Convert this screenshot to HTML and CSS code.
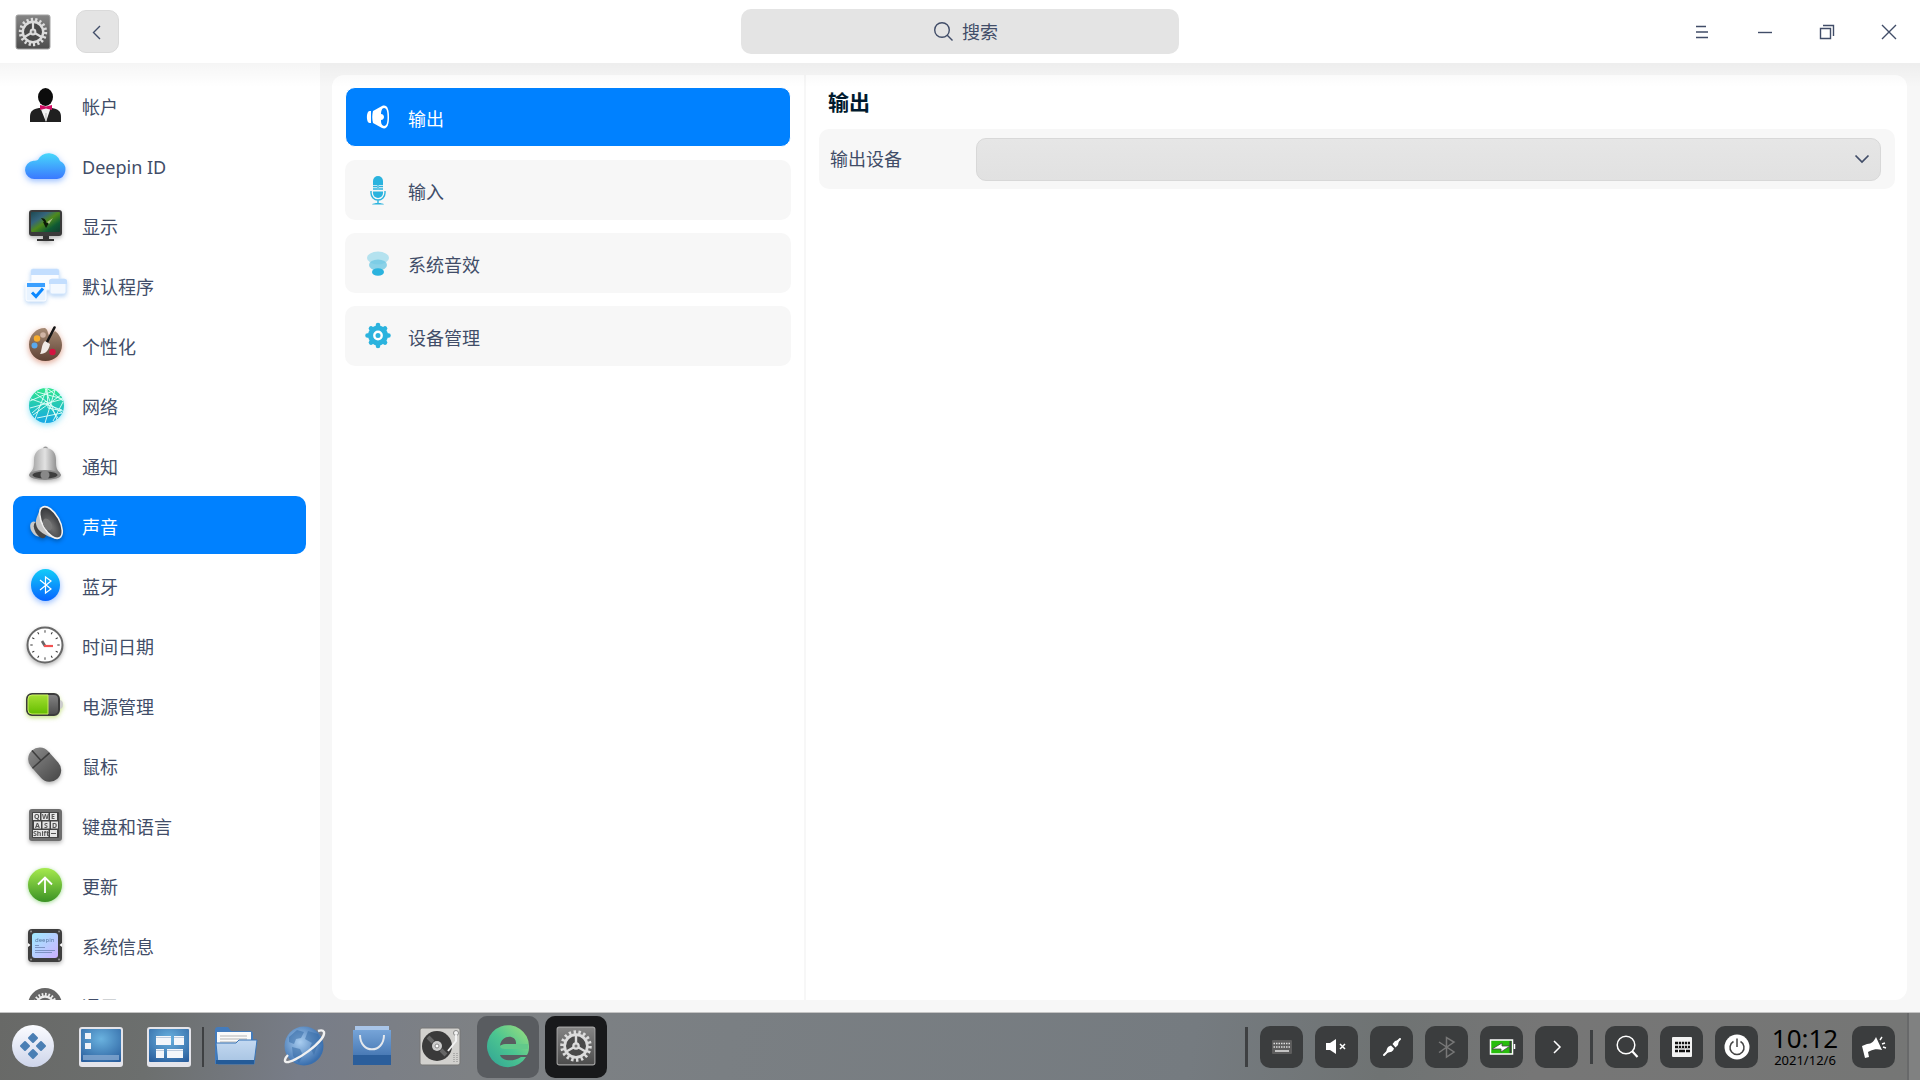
FILE: index.html
```
<!DOCTYPE html>
<html lang="zh-CN">
<head>
    <meta charset="UTF-8">
    <meta name="viewport" content="width=device-width, initial-scale=1.0">
    <title>控制中心</title>
    <link rel="stylesheet" href="styles.css">
</head>
<body>
    <!-- Shared gradients and symbols -->
    <svg class="defs" aria-hidden="true">
        <defs>
            <linearGradient id="g-dark" x1="0" y1="0" x2="0" y2="1"><stop offset="0" stop-color="#858585"/><stop offset="1" stop-color="#4c4c4c"/></linearGradient>
            <linearGradient id="g-cloud" x1="0" y1="0" x2="0" y2="1"><stop offset="0" stop-color="#47d8fb"/><stop offset="1" stop-color="#3a78ff"/></linearGradient>
            <linearGradient id="g-net" x1="0" y1="0" x2="0" y2="1"><stop offset="0" stop-color="#2fe68c"/><stop offset="1" stop-color="#16a8e6"/></linearGradient>
            <linearGradient id="g-bell" x1="0" y1="0" x2="1" y2="0"><stop offset="0" stop-color="#9a9a9a"/><stop offset=".5" stop-color="#e2e2e2"/><stop offset="1" stop-color="#777"/></linearGradient>
            <linearGradient id="g-bt" x1="0" y1="0" x2="0" y2="1"><stop offset="0" stop-color="#12ccf8"/><stop offset="1" stop-color="#0664ff"/></linearGradient>
            <linearGradient id="g-green" x1="0" y1="0" x2="0" y2="1"><stop offset="0" stop-color="#a6ea4e"/><stop offset="1" stop-color="#3a9224"/></linearGradient>
            <linearGradient id="g-bat" x1="0" y1="0" x2="0" y2="1"><stop offset="0" stop-color="#a4e032"/><stop offset="1" stop-color="#64bd00"/></linearGradient>
            <linearGradient id="g-pal" x1="0" y1="0" x2="0" y2="1"><stop offset="0" stop-color="#a58a74"/><stop offset="1" stop-color="#5f4234"/></linearGradient>
            <linearGradient id="g-chip" x1="0" y1="0" x2="1" y2="1"><stop offset="0" stop-color="#a0ecff"/><stop offset="1" stop-color="#cdb0ff"/></linearGradient>
            <linearGradient id="g-screen" x1="0" y1="0" x2="1" y2="1"><stop offset="0" stop-color="#1d4a52"/><stop offset=".3" stop-color="#35647c"/><stop offset=".5" stop-color="#4f8a1c"/><stop offset=".75" stop-color="#0f5a34"/><stop offset="1" stop-color="#123c30"/></linearGradient>
            <linearGradient id="g-white" x1="0" y1="0" x2="0" y2="1"><stop offset="0" stop-color="#fbfcff"/><stop offset="1" stop-color="#ced5ea"/></linearGradient>
            <linearGradient id="g-folder" x1="0" y1="0" x2="0" y2="1"><stop offset="0" stop-color="#c4d9f1"/><stop offset="1" stop-color="#a6c3e2"/></linearGradient>
            <linearGradient id="g-bag" x1="0" y1="0" x2="0" y2="1"><stop offset="0" stop-color="#76a4d8"/><stop offset="1" stop-color="#386aa8"/></linearGradient>
            <linearGradient id="g-e" x1="0" y1="1" x2="1" y2="0"><stop offset="0" stop-color="#2fa296"/><stop offset=".5" stop-color="#4cc590"/><stop offset="1" stop-color="#a0e07e"/></linearGradient>
            <radialGradient id="g-blue" cx=".5" cy=".3" r=".8"><stop offset="0" stop-color="#6ab2df"/><stop offset="1" stop-color="#2a5f9e"/></radialGradient>
            <radialGradient id="g-globe" cx=".4" cy=".4" r=".6"><stop offset="0" stop-color="#a9cdf0"/><stop offset="1" stop-color="#3a6fae"/></radialGradient>
            <radialGradient id="g-cone" cx=".4" cy=".6" r=".7"><stop offset="0" stop-color="#777"/><stop offset="1" stop-color="#2b2d31"/></radialGradient>

            <symbol id="gear" viewBox="0 0 36 36">
                <rect x="1" y="1" width="34" height="34" rx="2" fill="url(#g-dark)" stroke="#a2a2a2"/>
                <circle cx="18" cy="18" r="9" fill="#4a4a4a"/>
                <circle cx="18" cy="18" r="12.500" fill="none" stroke="#dcdcdc" stroke-width="3.400" pathLength="36" stroke-dasharray="1 1"/>
                <circle cx="18" cy="18" r="10.200" fill="none" stroke="#dcdcdc" stroke-width="2.400"/>
                <path d="M18 18V8M18 18l-9 5.200M18 18l9 5.200" stroke="#dcdcdc" stroke-width="2.200"/>
                <circle cx="18" cy="18" r="3.400" fill="#dcdcdc"/>
                <circle cx="18" cy="18" r="1.400" fill="#777"/>
            </symbol>
        </defs>
    </svg>

    <header class="titlebar">
        <div class="titlebar-left">
            <svg class="app-logo" aria-hidden="true"><use href="#gear"/></svg>
            <button class="back-button" aria-label="返回">
                <svg width="16" height="16" viewBox="0 0 16 16"><path d="M10 2L3.500 8.500L10 15" class="line"/></svg>
            </button>
        </div>
        <label class="search">
            <svg width="20" height="20" viewBox="0 0 20 20"><circle cx="9" cy="8" r="7.300" class="line"/><path d="M14 13l5.500 5.500" class="line"/></svg>
            <input type="text" placeholder="搜索" aria-label="搜索">
        </label>
        <div class="window-buttons">
            <button aria-label="菜单"><svg width="16" height="16" viewBox="0 0 16 16"><path d="M1 2.500h10M1 8h12M1 13.500h12" class="line"/></svg></button>
            <button aria-label="最小化"><svg width="16" height="16" viewBox="0 0 16 16"><path d="M1 8.500h14" class="line"/></svg></button>
            <button aria-label="还原"><svg width="16" height="16" viewBox="0 0 16 16"><path d="M1.500 4.500h10v10h-10zM4 1.500h10.500V12" class="line"/></svg></button>
            <button aria-label="关闭"><svg width="16" height="16" viewBox="0 0 16 16"><path d="M1 1l14 14M15 1L1 15" class="line"/></svg></button>
        </div>
    </header>

    <main class="window-body">
        <nav class="sidebar">
            <ul>
                <li><a href="#">
                    <svg class="icon" viewBox="0 0 44 44">
                        <path d="M7 39v-5c0-6 3-8 9-9h13c6 1 9 3 9 9v5z" fill="#202020"/>
                        <path d="M17 24h11l-5 15z" fill="#f2f2f2"/>
                        <path d="M23 30v8" stroke="#bbb"/>
                        <ellipse cx="22.500" cy="14" rx="7.500" ry="9" fill="#0c0c0c"/>
                        <path d="M17 22l6 1.500 6-1.500v5l-6-1.500-6 1.500z" fill="#d10d63"/>
                    </svg>
                    <span>帐户</span></a></li>
                <li><a href="#">
                    <svg class="icon glow-blue" viewBox="0 0 44 44">
                        <path d="M12 36a9 9 0 0 1-1.500-18.200c2 0 3.500-.3 4.500-1a12 12 0 0 1 22 1.200A9.500 9.500 0 0 1 34 36z" fill="url(#g-cloud)"/>
                    </svg>
                    <span>Deepin ID</span></a></li>
                <li><a href="#">
                    <svg class="icon shade" viewBox="0 0 44 44">
                        <rect x="6" y="7" width="33" height="26" rx="3" fill="#3a3a3a"/>
                        <rect x="8" y="9" width="29" height="20" rx="1" fill="url(#g-screen)"/>
                        <path d="M18 15c4 0 6 3 5 6-1-1-3-3-5-6zM20 19l6 1-3 5z" fill="#0c1a08"/>
                        <path d="M24 19l6-4-4 6z" fill="#a9bf86"/>
                        <path d="M20 33h6v3h5v2H14v-2h6z" fill="#333"/>
                    </svg>
                    <span>显示</span></a></li>
                <li><a href="#">
                    <svg class="icon glow-sky" viewBox="0 0 44 44">
                        <rect x="8" y="6" width="28" height="21" rx="2" fill="#fafcff" stroke="#dcebfd"/>
                        <path d="M8 12V8a2 2 0 0 1 2-2h24a2 2 0 0 1 2 2v4z" fill="#c3defe"/>
                        <rect x="27" y="16" width="16" height="15" rx="2" fill="#f4f9ff" stroke="#d3e6fc"/>
                        <path d="M26 21v-3a2 2 0 0 1 2-2h14a2 2 0 0 1 2 2v3z" fill="#c3defe"/>
                        <rect x="3" y="19" width="20" height="19" rx="2" fill="#e8f3ff" stroke="#fff"/>
                        <path d="M4 24v-4h18v4z" fill="#3ba0ff"/>
                        <path d="M9 29.500l4 4 7-8" fill="none" stroke="#0a88ff" stroke-width="3"/>
                    </svg>
                    <span>默认程序</span></a></li>
                <li><a href="#">
                    <svg class="icon glow-red" viewBox="0 0 44 44">
                        <path d="M22 5C13 5 6 12.500 6 21.500S13 38 22.500 38 39 31 39 22c0-6-3-11-7-14l-5 5c-3-1-1-6-5-8z" fill="url(#g-pal)"/>
                        <circle cx="20" cy="12" r="2.800" fill="#d0b4a4"/>
                        <circle cx="14" cy="15.500" r="3.200" fill="#f6ab2c"/>
                        <circle cx="11.500" cy="22.500" r="3" fill="#59a9ee"/>
                        <circle cx="29.500" cy="29" r="3.200" fill="#d4133f"/>
                        <path d="M31.500 4.500L24 19" stroke="#161616" stroke-width="2.600" stroke-linecap="round"/>
                        <path d="M22 18l5 3c-1 6-4 10-10 10 2-3 1-9 5-13z" fill="#f0ebe6"/>
                    </svg>
                    <span>个性化</span></a></li>
                <li><a href="#">
                    <svg class="icon glow-cyan" viewBox="0 0 44 44">
                        <circle cx="23.500" cy="22.500" r="17.500" fill="url(#g-net)"/>
                        <path d="M7 18l25-11-10 33M12 10l27 20-25 5M22 5l12 32M24 5l-12 31M7 25l33-9M10 32l28-20M8 16l31 11M30 38l10-19M25 6l15 12M14 9l26 7M24 5l1 20 15 3M9 30l14-12 12 17" stroke="#e2fff8" stroke-width=".9" fill="none"/>
                    </svg>
                    <span>网络</span></a></li>
                <li><a href="#">
                    <svg class="icon shade" viewBox="0 0 44 44">
                        <circle cx="22.500" cy="6" r="2.500" fill="#999"/>
                        <path d="M22 5c8 0 11 5 11 12 0 6 0 9 4 13H7c4-4 4-7 4-13C11 10 15 5 22 5z" fill="url(#g-bell)"/>
                        <ellipse cx="22" cy="32" rx="16" ry="5" fill="#8a8a8a"/>
                        <ellipse cx="22" cy="32" rx="12.500" ry="3.500" fill="#3e3e3e"/>
                        <circle cx="22" cy="32" r="4.500" fill="#888"/>
                    </svg>
                    <span>通知</span></a></li>
                <li><a href="#" class="active">
                    <svg class="icon shade" viewBox="0 0 44 44">
                        <ellipse cx="13" cy="26" rx="5" ry="8" transform="rotate(-30 13 26)" fill="#c9c9c9"/>
                        <ellipse cx="17" cy="27" rx="5" ry="9" transform="rotate(-30 17 27)" fill="#454545"/>
                        <path d="M17 4c-1 8-5 11-4 17 1 7 9 12 21 15z" fill="#c8c8c8"/>
                        <ellipse cx="28" cy="19.500" rx="8.500" ry="17.500" transform="rotate(-29 28 19.500)" fill="url(#g-cone)" stroke="#f1f1f1" stroke-width="1.600"/>
                        <ellipse cx="24.500" cy="21.500" rx="4" ry="6.500" transform="rotate(-29 24.500 21.500)" fill="#777"/>
                    </svg>
                    <span>声音</span></a></li>
                <li><a href="#">
                    <svg class="icon glow-blue" viewBox="0 0 44 44">
                        <ellipse cx="22.500" cy="22" rx="14.500" ry="16" fill="url(#g-bt)"/>
                        <path d="M17 17l11 9-5.500 4V14l5.500 4-11 9" fill="none" stroke="#fff" stroke-width="1.200"/>
                    </svg>
                    <span>蓝牙</span></a></li>
                <li><a href="#">
                    <svg class="icon shade" viewBox="0 0 44 44">
                        <circle cx="22" cy="22" r="17.500" fill="#fff" stroke="#686868" stroke-width="2"/>
                        <circle cx="22" cy="22" r="13.500" fill="none" stroke="#333" stroke-width="2.400" pathLength="120" stroke-dasharray="1.400 8.600" stroke-dashoffset=".7"/>
                        <path d="M19 18l3 5" stroke="#666" stroke-width="2.600"/>
                        <path d="M21 23h9" stroke="#f25252" stroke-width="2.200"/>
                    </svg>
                    <span>时间日期</span></a></li>
                <li><a href="#">
                    <svg class="icon glow-lime" viewBox="0 0 44 44">
                        <path d="M37 17c4 0 4 9 0 9z" fill="#ccc"/>
                        <rect x="4" y="11" width="32" height="21" rx="5" fill="url(#g-dark)" stroke="#3c3c3c" stroke-width="2"/>
                        <path d="M9 12h16v19H9a4 4 0 0 1-4-4V16a4 4 0 0 1 4-4z" fill="url(#g-bat)" stroke="#c8f05c"/>
                    </svg>
                    <span>电源管理</span></a></li>
                <li><a href="#">
                    <svg class="icon shade" viewBox="0 0 44 44">
                        <g transform="rotate(-42 22 22)">
                            <rect x="10.500" y="2.500" width="23" height="38" rx="11.500" fill="url(#g-dark)"/>
                            <path d="M10.500 16h23M22 2.500V16" stroke="#3d3d3d" stroke-width="1.500"/>
                        </g>
                    </svg>
                    <span>鼠标</span></a></li>
                <li><a href="#">
                    <svg class="icon shade" viewBox="0 0 44 44">
                        <rect x="6" y="6" width="33" height="32" rx="3" fill="#6e6e6e"/>
                        <rect x="9" y="9" width="27" height="26" rx="1" fill="#444"/>
                        <path d="M10 10h7v7h-7zM18.500 10h7v7h-7zM27 10h7v7h-7zM11 18.500h7v7h-7zM19.500 18.500h7v7h-7zM28 18.500h7v7h-7zM10 27h15.500v7H10zM27 27h7v7h-7z" fill="#e6e6e6"/>
                        <g class="keycaps"><text x="11" y="16">Q</text><text x="19" y="16">W</text><text x="28" y="16">E</text><text x="12" y="25">A</text><text x="21" y="25">S</text><text x="29" y="25">D</text><text x="10" y="33">Shift</text></g>
                        <path d="M28 30.500h5" stroke="#555"/>
                    </svg>
                    <span>键盘和语言</span></a></li>
                <li><a href="#">
                    <svg class="icon glow-green" viewBox="0 0 44 44">
                        <circle cx="22" cy="22" r="17" fill="url(#g-green)"/>
                        <path d="M22 30V15M15 21.500l7-7 7 7" fill="none" stroke="#fff" stroke-width="1.800"/>
                    </svg>
                    <span>更新</span></a></li>
                <li><a href="#">
                    <svg class="icon shade" viewBox="0 0 44 44">
                        <rect x="5" y="6" width="34" height="33" rx="4" fill="#3f3f3f"/>
                        <path d="M5 20l2.500 2L5 24zM39 20l-2.500 2 2.500 2z" fill="#fff"/>
                        <rect x="9" y="10" width="26" height="25" rx="3" fill="url(#g-chip)"/>
                        <text x="12" y="19" class="chip-text">deepin</text>
                        <path d="M12 22.500h4M12 24.500h10M12 27.500h20M12 29.500h17" stroke="#6e84b4" stroke-width=".8"/>
                        <path d="M8 8.500h.1M36 8.500h.1M8 36.500h.1M36 36.500h.1" stroke="#999" stroke-width="1.800" stroke-linecap="round"/>
                    </svg>
                    <span>系统信息</span></a></li>
                <li><a href="#">
                    <svg class="icon" viewBox="0 0 44 44">
                        <circle cx="22" cy="22" r="17" fill="#666"/>
                        <circle cx="22" cy="22" r="10.500" fill="none" stroke="#ececec" stroke-width="3.400" pathLength="40" stroke-dasharray="1 1"/>
                        <circle cx="22" cy="22" r="8.500" fill="none" stroke="#ececec" stroke-width="2.400"/>
                    </svg>
                    <span>通用</span></a></li>
            </ul>
        </nav>

        <div class="content">
            <nav class="submenu">
                <a href="#" class="active">
                    <svg class="sub-icon" viewBox="0 0 32 32">
                        <path d="M9 10v12H7.500C4 22 4 10 7.500 10z" fill="#fff"/>
                        <path d="M11 10l9-5c5-2 7 3 7 11s-2 13-7 11l-9-5c-1-4-1-8 0-12z" fill="#fff"/>
                        <path d="M22 7c3 0 3.500 4 3.500 9S25 25 22 25c-3-1-3-4-3-6 4 0 4-6 0-6 0-3 1-6 3-6z" fill="#0081ff"/>
                    </svg>
                    <span>输出</span>
                </a>
                <a href="#">
                    <svg class="sub-icon" viewBox="0 0 32 32">
                        <path d="M11 11V7a5 5 0 0 1 10 0v4z" fill="#2bb3de"/>
                        <path d="M11 12.500h4M17 12.500h4M11 15h4M17 15h4M16 11v5" stroke="#2bb3de" stroke-width="1.400"/>
                        <path d="M11 17.500h10V19a5 5 0 0 1-10 0z" fill="#2bb3de"/>
                        <path d="M9 17v2a7 7 0 0 0 14 0v-2M16 26v3" fill="none" stroke="#2bb3de" stroke-width="1.400"/>
                        <path d="M10 30.500c1-2 11-2 12 0z" fill="#2bb3de"/>
                    </svg>
                    <span>输入</span>
                </a>
                <a href="#">
                    <svg class="sub-icon" viewBox="0 0 32 32">
                        <ellipse cx="16" cy="11" rx="11" ry="6.500" fill="#b4e2ef"/>
                        <ellipse cx="16" cy="18" rx="9" ry="5.500" fill="#6fc8e4" opacity=".8"/>
                        <ellipse cx="16" cy="25" rx="6" ry="3.800" fill="#2bb3de"/>
                    </svg>
                    <span>系统音效</span>
                </a>
                <a href="#">
                    <svg class="sub-icon" viewBox="0 0 32 32">
                        <circle cx="16" cy="15.500" r="10" fill="#2bb3de"/>
                        <path d="M16 5v21M5.500 15.500h21M9 8.500l14 14M23 8.500l-14 14" stroke="#2bb3de" stroke-width="4.600" stroke-linecap="round"/>
                        <circle cx="16" cy="15.500" r="3.700" fill="#2bb3de" stroke="#fff" stroke-width="2.400"/>
                    </svg>
                    <span>设备管理</span>
                </a>
            </nav>

            <section class="detail">
                <h1>输出</h1>
                <div class="setting-row">
                    <label for="output-device">输出设备</label>
                    <div class="select-wrap">
                        <select id="output-device"><option value=""></option></select>
                        <svg class="chevron" width="16" height="16" viewBox="0 0 16 16"><path d="M1.500 4.500L8 11l6.500-6.500" fill="none" stroke="#414d68" stroke-width="1.700"/></svg>
                    </div>
                </div>
            </section>
        </div>
    </main>

    <footer class="dock">
        <div class="dock-apps">
            <button class="app" aria-label="启动器">
                <svg viewBox="0 0 48 48"><circle cx="24" cy="23" r="21" fill="url(#g-white)"/><path d="M24 11l4 4-4 4-4-4zM24 27l4 4-4 4-4-4zM16 19l4 4-4 4-4-4zM32 19l4 4-4 4-4-4z" fill="#4b7fb4" stroke="#4b7fb4" stroke-width="2" stroke-linejoin="round"/></svg>
            </button>
            <button class="app" aria-label="显示桌面">
                <svg viewBox="0 0 48 48"><rect x="2" y="4" width="44" height="40" rx="3" fill="#e4e4ea"/><rect x="4" y="6" width="40" height="33" rx="1" fill="url(#g-blue)"/><path d="M8 10h6v6H8zM8 20h6v6H8z" fill="#eef2f8"/><path d="M6 32h36v5H6z" fill="#84a8d0" opacity=".8"/></svg>
            </button>
            <button class="app" aria-label="多任务视图">
                <svg viewBox="0 0 48 48"><rect x="2" y="4" width="44" height="40" rx="3" fill="#e4e4ea"/><rect x="4" y="6" width="40" height="33" rx="1" fill="url(#g-blue)"/><path d="M11 13h15v9H11zM29 13h10v9H29zM11 26h8v9h-8zM22 26h16v9H22z" fill="#f3f6fa"/><path d="M11 14.500h15M29 14.500h10M11 27.500h8M22 27.500h16" stroke="#bccbdd"/></svg>
            </button>
            <span class="separator"></span>
            <button class="app" aria-label="文件管理器">
                <svg viewBox="0 0 48 48"><path d="M3 41V7c0-2 1-3 3-3h10l3 4h19c2 0 3 1 3 3v30z" fill="#447bbb"/><path d="M5 9h34v20H5z" fill="#fafafa"/><path d="M8 13h27M8 16h27M8 19h17" stroke="#b5b5b5"/><path d="M4 20h20l3-3h18l-3 24H6z" fill="url(#g-folder)" stroke="#3975b7"/><path d="M4 37h38v4H4z" fill="#245b98"/></svg>
            </button>
            <button class="app" aria-label="浏览器">
                <svg viewBox="0 0 48 48"><circle cx="24" cy="23" r="19.500" fill="url(#g-globe)"/><path d="M9 14l8-7 7 2-3 6-5 1-2 5-5-2zM12 24l8 2 3 6-4 8-6-7zM28 8l10 3 4 9-5 3-3 9-4-8 2-4-7-4z" fill="#376ba5" opacity=".55"/><path d="M8 32c-3 3-4 6-2 7 7 2 40-21 38-30-1-2-3-2-6-1" fill="none" stroke="#f1f1f1" stroke-width="2.400"/></svg>
            </button>
            <button class="app" aria-label="应用商店">
                <svg viewBox="0 0 48 48"><path d="M7 3h34v5H7z" fill="#a9c5e8"/><path d="M5 7h38v35H5z" fill="url(#g-bag)"/><path d="M5 32h38v10H5z" fill="#2b5e9b"/><path d="M12 12c0 19 24 19 24 0" fill="none" stroke="#e4e8ed" stroke-width="2"/></svg>
            </button>
            <button class="app" aria-label="音乐">
                <svg viewBox="0 0 48 48"><rect x="4" y="5" width="40" height="37" rx="2" fill="#d2d1ce" stroke="#777"/><circle cx="21" cy="23" r="15" fill="#3a3a3a"/><path d="M12 14l5 5M25 27l5 5" stroke="#666" stroke-width="4"/><circle cx="21" cy="23" r="5" fill="#ccc"/><circle cx="21" cy="23" r="2" fill="#fff" stroke="#888"/><circle cx="40" cy="10" r="2.500" fill="#f2f2f2" stroke="#888"/><path d="M40 12v6l-8 10" fill="none" stroke="#f2f2f2" stroke-width="2"/><path d="M38 30v10M41 30v10" stroke="#888" stroke-dasharray="1 1"/></svg>
            </button>
            <button class="app running" aria-label="微软浏览器">
                <svg viewBox="0 0 48 48"><path d="M45 23A21 21 0 1 0 42 34h-5c-9 6-20 3-21-2h27c2-3 2-6 2-9zM32 21c-7 0-13 0-16 2 1-12 17-12 16-2z" fill="url(#g-e)" fill-rule="evenodd"/><path d="M16 23c0 2 2 3 5 3h23v-5H22c-3 0-5 1-6 2z" fill="#62c98a"/></svg>
            </button>
            <button class="app current" aria-label="控制中心">
                <svg viewBox="0 0 48 48"><use href="#gear" x="4" y="3" width="40" height="40"/></svg>
            </button>
        </div>

        <div class="tray">
            <span class="separator"></span>
            <button aria-label="虚拟键盘"><svg viewBox="0 0 32 32"><rect x="6" y="9" width="20" height="14" rx="1" fill="#5d5d5d"/><path d="M7.500 12.500h17M7.500 16h17" stroke="#ddd" stroke-width="1.500" stroke-dasharray="1.500 1"/><path d="M9 20h14" stroke="#ddd" stroke-width="1.600"/></svg></button>
            <button aria-label="音量"><svg viewBox="0 0 32 32"><path d="M5 12h4l6-4v15l-6-4H5z" fill="#fff"/><path d="M19 13l5 5M24 13l-5 5" stroke="#fff" stroke-width="1.500"/></svg></button>
            <button aria-label="网络"><svg viewBox="0 0 32 32"><path d="M8 24l5-5M19 13l5-5" stroke="#fff" stroke-width="2" stroke-linecap="round"/><path d="M10.500 21.500c0-4 1-6 4.500-7l3 3c-1 3-3 4-7.500 4zM16.500 13l2.500-3 4-1-1 5-2.500 2.500z" fill="#fff"/></svg></button>
            <button aria-label="蓝牙"><svg viewBox="0 0 32 32"><path d="M8 11l15 10-7.500 5V6.500L23 11 8 21.500" fill="none" stroke="#777" stroke-width="1.500"/></svg></button>
            <button aria-label="电池"><svg viewBox="0 0 32 32"><rect x="4.500" y="9" width="22" height="14" fill="#27bd0c" stroke="#fff" stroke-width="1.500"/><path d="M24.500 10v12" stroke="#3b3d3e" stroke-width="2"/><path d="M28.500 13v5" stroke="#fff" stroke-width="1.500"/><path d="M6 18l10-6v3h8l-9 6v-3z" fill="#fff" stroke="#444" stroke-width=".8"/></svg></button>
            <button aria-label="更多"><svg viewBox="0 0 32 32"><path d="M13 10l6 6-6 6" fill="none" stroke="#fff" stroke-width="1.500"/></svg></button>
            <span class="separator short"></span>
            <button aria-label="全局搜索"><svg viewBox="0 0 32 32"><circle cx="15" cy="14" r="8.800" fill="none" stroke="#fff" stroke-width="1.500"/><path d="M21 20l5.500 6" stroke="#fff" stroke-width="2.200"/></svg></button>
            <button aria-label="屏幕键盘"><svg viewBox="0 0 32 32"><rect x="6" y="6" width="20" height="20" rx="1" fill="#f3f3f3"/><path d="M9 12h15M9 16h15M9 20h3M13 20h6M20 20h4" stroke="#111" stroke-width="2.400"/><path d="M12.500 10v7M15.500 10v7M18.500 10v7M21.500 10v7" stroke="#f3f3f3" stroke-width=".8"/></svg></button>
            <button aria-label="电源"><svg viewBox="0 0 32 32"><circle cx="16" cy="16" r="12.500" fill="#fff"/><path d="M12.500 10.500a7 7 0 1 0 7 0M16 7.500V16" fill="none" stroke="#444" stroke-width="1.500"/></svg></button>
            <time class="clock" datetime="2021-12-06T10:12"><span class="clock-time">10:12</span><span class="clock-date">2021/12/6</span></time>
            <button aria-label="通知中心"><svg viewBox="0 0 32 32"><path d="M4 15l5-2c5 0 7-3 9-7l6 13c-4-1-8-1-12 1l-2 1 1 5-4 1z" fill="#fff"/><path d="M22 9l2-3M24 13l3-1M25 16l3 1" stroke="#fff" stroke-width="1.400"/></svg></button>
            <span class="desktop-edge"></span>
        </div>
    </footer>
</body>
</html>
```
FILE: styles.css
```
:root {
    --accent: #0081ff;
    --text: #414d68;
    --bg: #f7f7f7;
    --control: #e4e4e4;
    --radius: 10px;
}

* {
    box-sizing: border-box;
    margin: 0;
    padding: 0;
}

body {
    display: flex;
    flex-direction: column;
    height: 100vh;
    overflow: hidden;
    font-family: "Noto Sans", "Noto Sans CJK SC", sans-serif;
    font-size: 18px;
    line-height: 26px;
    color: var(--text);
    background-color: var(--bg);
}

button {
    display: flex;
    align-items: center;
    justify-content: center;
    border: none;
    background: none;
}

a {
    color: inherit;
    text-decoration: none;
}

ul {
    list-style: none;
}

.defs {
    position: absolute;
    width: 0;
    height: 0;
}

.line {
    fill: none;
    stroke: var(--text);
    stroke-width: 1.4;
}

/* Title bar */
.titlebar {
    display: grid;
    grid-template-columns: 1fr 438px 1fr;
    align-items: center;
    flex: none;
    height: 63px;
    background-color: #fff;
}

.titlebar-left {
    display: flex;
    align-items: center;
    gap: 25px;
    padding-left: 15px;
}

.app-logo {
    width: 36px;
    height: 36px;
}

.back-button {
    width: 43px;
    height: 43px;
    border: 1px solid #dadada;
    border-radius: var(--radius);
    background-color: var(--control);
}

.search {
    display: flex;
    align-items: center;
    justify-content: center;
    gap: 9px;
    height: 45px;
    padding-left: 11px;
    border-radius: var(--radius);
    background-color: var(--control);
}

.search input {
    width: 36px;
    border: none;
    outline: none;
    background: none;
    font: inherit;
    color: var(--text);
}

.search input::placeholder {
    color: var(--text);
    opacity: 1;
}

.window-buttons {
    display: flex;
    justify-content: flex-end;
}

.window-buttons button {
    width: 62px;
    height: 62px;
}

/* Window body */
.window-body {
    position: relative;
    display: flex;
    flex: 1;
    min-height: 0;
}

.window-body::before {
    content: "";
    position: absolute;
    z-index: 1;
    top: 0;
    left: 0;
    right: 0;
    height: 24px;
    background: linear-gradient(rgba(0, 0, 0, 0.04), rgba(0, 0, 0, 0));
    pointer-events: none;
}

.sidebar {
    flex: none;
    width: 320px;
    padding: 13px 14px 12px 13px;
    background-color: #fff;
}

.sidebar ul {
    display: flex;
    flex-direction: column;
    gap: 2px;
    height: 100%;
    overflow: hidden;
}

.sidebar li {
    flex: none;
}

.sidebar a {
    display: flex;
    align-items: center;
    gap: 15px;
    height: 58px;
    padding-left: 10px;
    border-radius: var(--radius);
}

.sidebar a span,
.submenu a span {
    padding-top: 3px;
}

.sidebar a.active,
.submenu a.active {
    background-color: var(--accent);
    color: #fff;
}

.icon {
    flex: none;
    width: 44px;
    height: 44px;
    overflow: visible;
}

.shade { filter: drop-shadow(0 2px 2px rgba(0, 0, 0, 0.3)); }
.glow-blue { filter: drop-shadow(0 2px 3px rgba(40, 120, 255, 0.5)); }
.glow-sky { filter: drop-shadow(0 2px 2px rgba(80, 150, 230, 0.4)); }
.glow-red { filter: drop-shadow(0 2px 3px rgba(190, 70, 30, 0.5)); }
.glow-cyan { filter: drop-shadow(0 2px 3px rgba(40, 200, 240, 0.5)); }
.glow-lime { filter: drop-shadow(0 2px 2px rgba(150, 200, 30, 0.5)); }
.glow-green { filter: drop-shadow(0 1px 2px rgba(60, 180, 30, 0.5)); }

.keycaps {
    font-size: 7px;
    font-weight: bold;
    fill: #555;
}

.chip-text {
    font-size: 6px;
    fill: #5b7ba4;
}

.content {
    display: flex;
    flex: 1;
    margin: 12px 13px 12px 12px;
    border-radius: 12px;
    background-color: #fff;
}

.submenu {
    display: flex;
    flex-direction: column;
    gap: 13px;
    flex: none;
    width: 474px;
    padding: 12px 13px;
    border-right: 2px solid var(--bg);
}

.submenu a {
    display: flex;
    align-items: center;
    gap: 14px;
    height: 60px;
    padding-left: 17px;
    border-radius: var(--radius);
    background-color: var(--bg);
}

.submenu a.active {
    border: 1px solid #fff;
    padding-left: 16px;
}

.sub-icon {
    flex: none;
    width: 32px;
    height: 32px;
}

.detail {
    flex: 1;
    padding: 13px 12px 0 13px;
}

.detail h1 {
    margin-bottom: 13px;
    padding-left: 9px;
    font-size: 21px;
    line-height: 28px;
    color: #001a2e;
}

.setting-row {
    display: flex;
    align-items: center;
    height: 60px;
    padding: 0 14px 0 11px;
    border-radius: var(--radius);
    background-color: var(--bg);
}

.setting-row label {
    width: 146px;
}

.select-wrap {
    position: relative;
    flex: 1;
}

.select-wrap select {
    display: block;
    width: 100%;
    height: 43px;
    padding: 0 40px 0 12px;
    appearance: none;
    border: 1px solid #d8d8d8;
    border-radius: var(--radius);
    background: linear-gradient(#e6e6e6, #e1e1e1);
    font: inherit;
    color: inherit;
}

.chevron {
    position: absolute;
    top: 13px;
    right: 11px;
    pointer-events: none;
}

/* Dock */
.dock {
    display: flex;
    justify-content: space-between;
    flex: none;
    height: 68px;
    border-top: 1px solid #c4c4c4;
    background: linear-gradient(100deg, #686967 0%, #6c6f6e 8%, #787d88 16%, #7e8184 25%, #7a7f83 38%, #757b80 62%, #6f7373 72%, #767676 80%, #757675 100%);
}

.dock-apps,
.tray {
    display: flex;
    align-items: center;
}

.dock-apps {
    gap: 6px;
    padding-left: 2px;
}

.app {
    width: 62px;
    height: 62px;
    border-radius: var(--radius);
}

.app svg {
    width: 48px;
    height: 48px;
}

.app.running {
    background-color: #595c60;
}

.app.current {
    background-color: #18191b;
}

.separator {
    width: 3px;
    height: 40px;
    background-color: #3e4042;
}

.separator.short {
    height: 34px;
}

.dock-apps .separator {
    width: 2px;
    margin: 0 -5px 0 -4px;
}

.tray {
    gap: 12px;
}

.tray button {
    width: 43px;
    height: 42px;
    border-radius: var(--radius);
    background-color: #3b3d3e;
}

.tray button svg {
    width: 32px;
    height: 32px;
}

.clock {
    display: flex;
    flex-direction: column;
    align-items: center;
    width: 70px;
    color: #000;
}

.clock-time {
    font-size: 26px;
    line-height: 26px;
}

.clock-date {
    font-size: 13px;
    line-height: 18px;
}

.desktop-edge {
    width: 13px;
    height: 67px;
    border-left: 2px solid #68696a;
    background-color: #808181;
}
```
